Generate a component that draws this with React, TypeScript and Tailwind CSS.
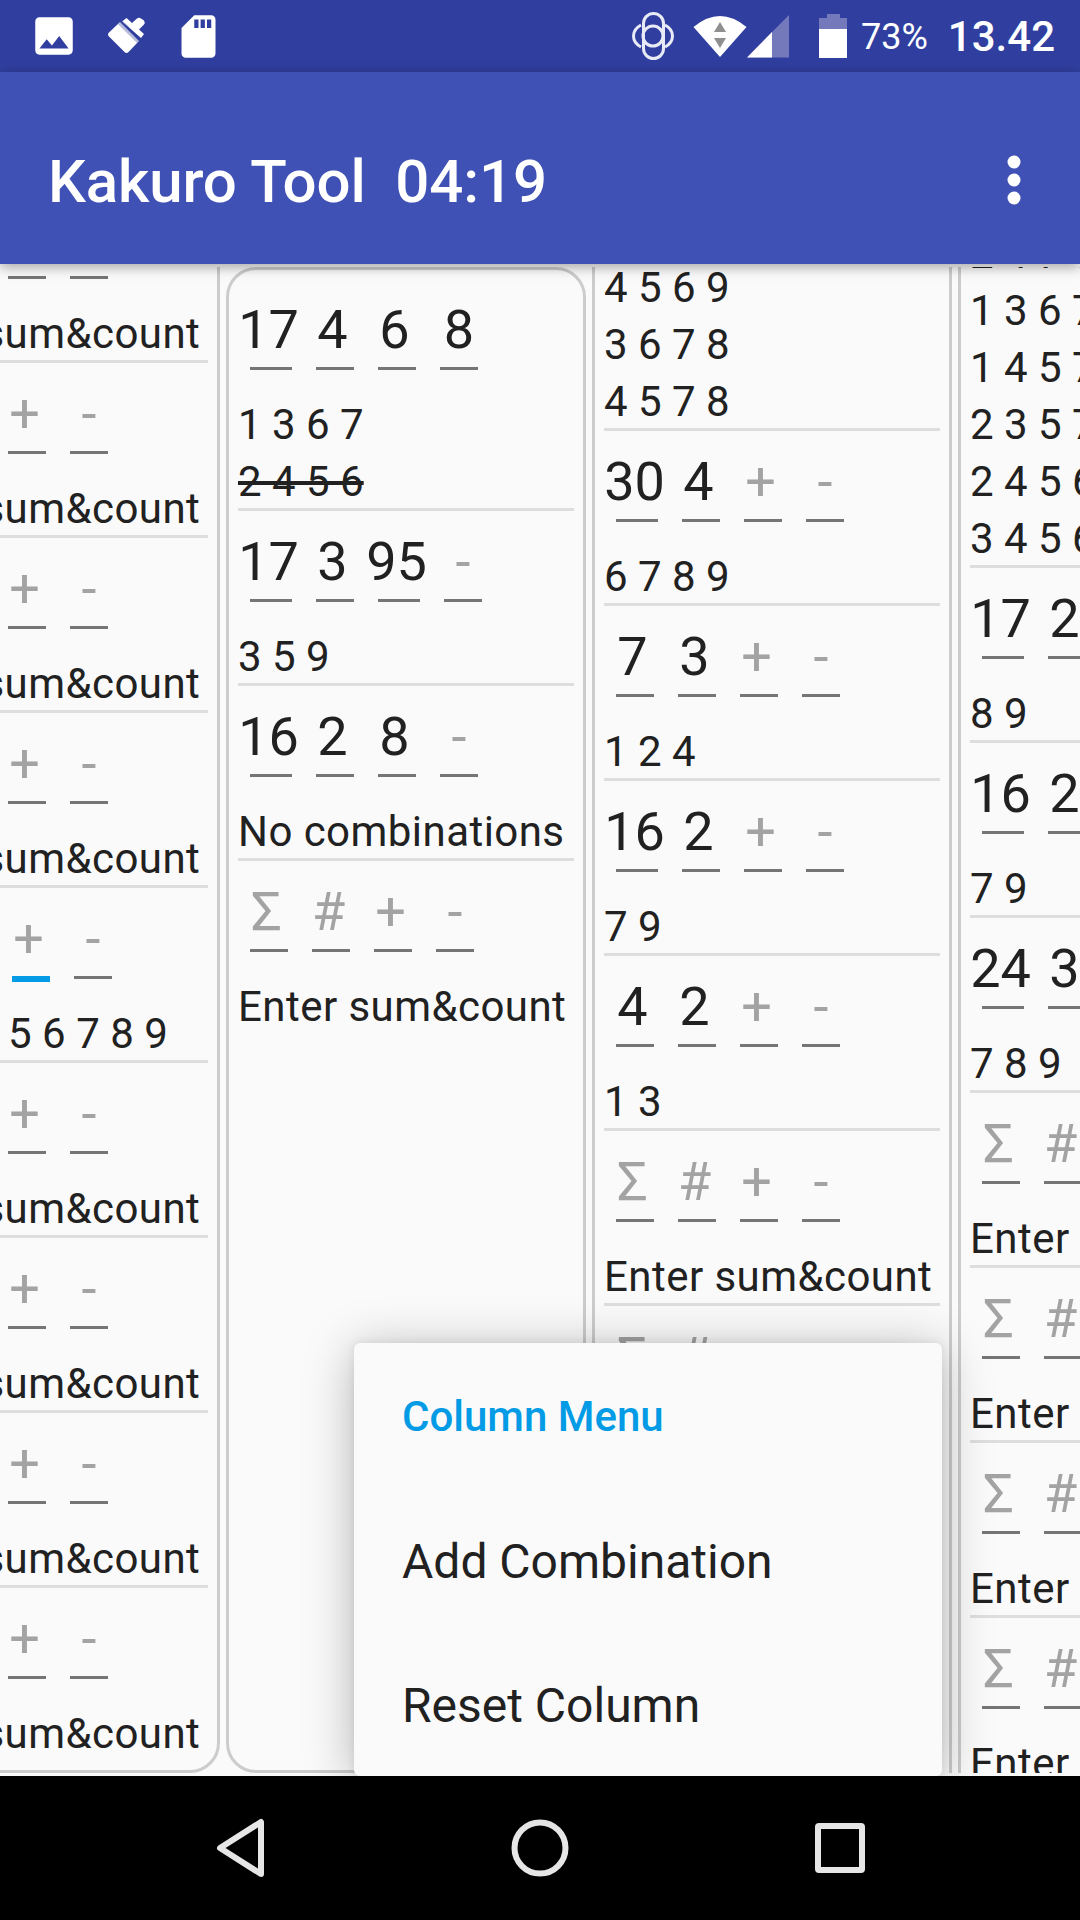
import React from 'react';

type RowData = {
  inputs: string[];
  lines: string[];
  strike?: number;
  active?: boolean;
};

const ENTER = 'Enter sum&count';
const BLANK = ['Σ', '#', '+', '-'];
const HINTS = ['Σ', '#', '+', '-'];

const emptyRow: RowData = { inputs: BLANK, lines: [ENTER] };

const column1: RowData[] = [
  emptyRow,
  emptyRow,
  emptyRow,
  emptyRow,
  { inputs: ['45', '9', '+', '-'], lines: ['1 2 3 4 5 6 7 8 9'], active: true },
  emptyRow,
  emptyRow,
  emptyRow,
  emptyRow,
];

const column2: RowData[] = [
  { inputs: ['17', '4', '6', '8'], lines: ['1 3 6 7', '2 4 5 6'], strike: 1 },
  { inputs: ['17', '3', '95', '-'], lines: ['3 5 9'] },
  { inputs: ['16', '2', '8', '-'], lines: ['No combinations'] },
  emptyRow,
];

const column3: RowData[] = [
  { inputs: ['30', '4', '+', '-'], lines: ['4 5 6 9', '3 6 7 8', '4 5 7 8'] },
  { inputs: ['30', '4', '+', '-'], lines: ['6 7 8 9'] },
  { inputs: ['7', '3', '+', '-'], lines: ['1 2 4'] },
  { inputs: ['16', '2', '+', '-'], lines: ['7 9'] },
  { inputs: ['4', '2', '+', '-'], lines: ['1 3'] },
  emptyRow,
  emptyRow,
  emptyRow,
  emptyRow,
];

const column4: RowData[] = [
  {
    inputs: ['17', '4', '+', '-'],
    lines: ['2 4 7 8', '1 3 6 7', '1 4 5 7', '2 3 5 7', '2 4 5 6', '3 4 5 6'],
  },
  { inputs: ['17', '2', '+', '-'], lines: ['8 9'] },
  { inputs: ['16', '2', '+', '-'], lines: ['7 9'] },
  { inputs: ['24', '3', '+', '-'], lines: ['7 8 9'] },
  emptyRow,
  emptyRow,
  emptyRow,
  emptyRow,
  emptyRow,
];

function CellInput({ value, last, active }: { value: string; last: boolean; active: boolean }) {
  const wide = value.length > 1;
  const hint = HINTS.includes(value);
  return (
    <div className={`flex flex-col items-stretch shrink-0 ${wide ? 'w-[66px]' : 'w-[62px]'}`}>
      <div
        className={`h-[64px] flex justify-center text-[54px] leading-[64px] whitespace-nowrap ${
          last ? '' : 'pr-[5px]'
        } ${hint ? 'text-[#a3a3a3]' : 'text-[#212121]'}`}
      >
        {value}
      </div>
      <div
        className={`mt-[5px] mx-[12px] ${
          active ? 'h-[6px] -mb-[3px] bg-[#039be5]' : 'h-[3px] bg-[#757575]'
        }`}
      />
    </div>
  );
}

function Row({ row, separator }: { row: RowData; separator: boolean }) {
  return (
    <div>
      <div className="flex h-[117px] pt-[19px]">
        {row.inputs.map((value, i) => (
          <CellInput
            key={i}
            value={value}
            last={i === row.inputs.length - 1}
            active={!!row.active && i === 2}
          />
        ))}
      </div>
      <div className="-mb-[2px] text-[42px] leading-[57px] text-[#212121] whitespace-nowrap">
        {row.lines.map((line, i) => (
          <div
            key={i}
            className={`${row.strike === i ? 'line-through' : ''} ${/[a-z]/.test(line) ? 'tracking-[0.45px]' : ''}`}
          >
            {line}
          </div>
        ))}
      </div>
      {separator ? <div className="h-[3px] bg-[#dedede]" /> : <div className="h-[1px]" />}
    </div>
  );
}

function Column({ rows, className, closed }: { rows: RowData[]; className: string; closed?: boolean }) {
  return (
    <div
      className={`w-[360px] shrink-0 rounded-[30px] border-[3px] border-[#cccccc] pl-[9px] pr-[9px] pt-[9px] pb-[9px] ${className}`}
    >
      {rows.map((row, i) => (
        <Row key={i} row={row} separator={!closed || i < rows.length - 1} />
      ))}
    </div>
  );
}

function StatusBar() {
  return (
    <div className="h-[72px] shrink-0 bg-[#303f9f] flex items-center text-white">
      {/* photo */}
      <svg className="ml-[29px] w-[50px] h-[50px] shrink-0" viewBox="0 0 24 24" fill="#fff">
        <path d="M21 19V5c0-1.1-.9-2-2-2H5c-1.1 0-2 .9-2 2v14c0 1.1.9 2 2 2h14c1.1 0 2-.9 2-2zM8.5 13.5l2.5 3.01L14.5 12l4.5 6H5l3.5-4.5z" />
      </svg>
      {/* brush */}
      <svg className="ml-[29px] w-[38px] h-[38px] shrink-0" viewBox="0 0 38 38" fill="#fff">
        <path d="M1 15.5 L12 5 L31 24 L20.5 35 Q18.5 37 16.5 35 L1 19.5 Q-1 17.5 1 15.5Z" />
        <path d="M14 4.5 L18.5 1 L24 6 L29 1.5 Q31 0 33 1.5 L36 3.5 Q37.5 6 36 7.5 L31 12.5 L36 17 L33 21Z" />
        <path d="M10 7.2 L14 3 L33 22 L29.2 26Z" fill="#303f9f" opacity="0.35" />
      </svg>
      {/* sd card */}
      <svg className="ml-[27px] w-[51px] h-[51px] shrink-0" viewBox="0 0 24 24" fill="#fff">
        <path d="M18 2h-8L4.02 8 4 20c0 1.1.9 2 2 2h12c1.1 0 2-.9 2-2V4c0-1.1-.9-2-2-2zm-6 6h-2V4h2v4zm3 0h-2V4h2v4zm3 0h-2V4h2v4z" />
      </svg>
      <div className="flex-1" />
      {/* ring */}
      <svg className="w-[42px] h-[48px] shrink-0" viewBox="0 0 42 48" fill="none" stroke="#e8eaf6" strokeWidth="3">
        <rect x="11.5" y="1.5" width="20" height="45" rx="10" />
        <circle cx="21" cy="24" r="10" />
        <path d="M9 13 Q1.5 17 1.5 24 Q1.5 31 9 35" />
        <path d="M33 13 Q40.5 17 40.5 24 Q40.5 31 33 35" />
      </svg>
      {/* wifi */}
      <svg className="ml-[19px] w-[54px] h-[44px] shrink-0" viewBox="0 0 54 44">
        <path d="M0.5 13 Q27 -9 53.5 13 L27 43 Z" fill="#fff" />
        <path d="M27 8 L33 18 H21 Z M21 24 H33 L27 34 Z" fill="#8f8f8f" />
      </svg>
      {/* signal */}
      <svg className="w-[43px] h-[44px] shrink-0" viewBox="0 0 43 44">
        <path d="M0 43.5 L42 1 V43.5 Z" fill="#7479bc" />
        <path d="M0 43.5 L25 18 V43.5 Z" fill="#fff" />
      </svg>
      {/* battery */}
      <div className="ml-[29px] w-[28px] h-[44px] flex flex-col items-center shrink-0">
        <div className="w-[13px] h-[4px] bg-[#7479bc]" />
        <div className="w-full h-[11px] bg-[#7479bc]" />
        <div className="w-full flex-1 bg-white" />
      </div>
      <div className="ml-[14px] mt-[2px] text-[36px] leading-[72px] font-normal">73%</div>
      <div className="ml-[20px] mr-[25px] mt-[2px] text-[42px] leading-[72px] font-medium">13.42</div>
    </div>
  );
}

function AppBar() {
  return (
    <div className="relative z-10 h-[192px] shrink-0 bg-[#3f51b5] flex items-center pl-[48px] pr-[54px] pt-[28px] shadow-[0_3px_12px_rgba(0,0,0,0.35)]">
      <div className="text-[60px] leading-[70px] font-medium tracking-[-0.1px] text-white whitespace-pre">Kakuro Tool  04:19</div>
      <div className="flex-1" />
      <svg className="w-[24px] h-[60px] shrink-0 -mt-[4px]" viewBox="0 0 24 60" fill="#fff">
        <circle cx="12" cy="12" r="6.5" />
        <circle cx="12" cy="30" r="6.5" />
        <circle cx="12" cy="48" r="6.5" />
      </svg>
    </div>
  );
}

function ColumnMenu() {
  return (
    <div className="absolute top-[1079px] left-[354px] w-[588px] h-[433px] pt-[3px] rounded-[6px] bg-[#fafafa] shadow-[0_6px_50px_rgba(0,0,0,0.28),0_0_10px_rgba(0,0,0,0.08)] z-20">
      <div className="h-[144px] pl-[48px] pb-[3px] flex items-center text-[42px] font-medium text-[#039be5]">Column Menu</div>
      <div className="h-[144px] pl-[48px] flex items-center text-[48px] text-[#212121]">Add Combination</div>
      <div className="h-[144px] pl-[48px] flex items-center text-[48px] text-[#212121]">Reset Column</div>
    </div>
  );
}

function NavBar() {
  return (
    <div className="h-[144px] shrink-0 bg-black flex items-center justify-center gap-[240px]">
      <svg className="w-[60px] h-[60px]" viewBox="0 0 60 60" fill="none" stroke="#e6e6e6" strokeWidth="6" strokeLinejoin="round">
        <path d="M51 4 V56 L10 30 Z" />
      </svg>
      <svg className="w-[60px] h-[60px]" viewBox="0 0 60 60" fill="none" stroke="#e6e6e6" strokeWidth="6">
        <circle cx="30" cy="30" r="25.5" />
      </svg>
      <svg className="w-[60px] h-[60px]" viewBox="0 0 60 60" fill="none" stroke="#e6e6e6" strokeWidth="6" strokeLinejoin="round">
        <rect x="8" y="8" width="44" height="44" rx="1" />
      </svg>
    </div>
  );
}

export default function App() {
  return (
    <div className="w-[1080px] h-[1920px] flex flex-col overflow-hidden bg-[#fafafa] font-['Roboto',sans-serif]">
      <StatusBar />
      <AppBar />
      {/* Kakuro columns, each one scrolled on its own */}
      <div className="relative flex-1 min-h-0 py-[3px]">
        <div className="h-full overflow-hidden">
          <div className="flex items-start gap-[6px] h-full -ml-[140px]">
            <Column rows={column1} closed className="self-end" />
            <Column rows={column2} closed className="h-full" />
            <Column rows={column3} className="-mt-[137px]" />
            <Column rows={column4} className="-mt-[171px]" />
          </div>
        </div>
        <ColumnMenu />
      </div>
      <NavBar />
    </div>
  );
}
